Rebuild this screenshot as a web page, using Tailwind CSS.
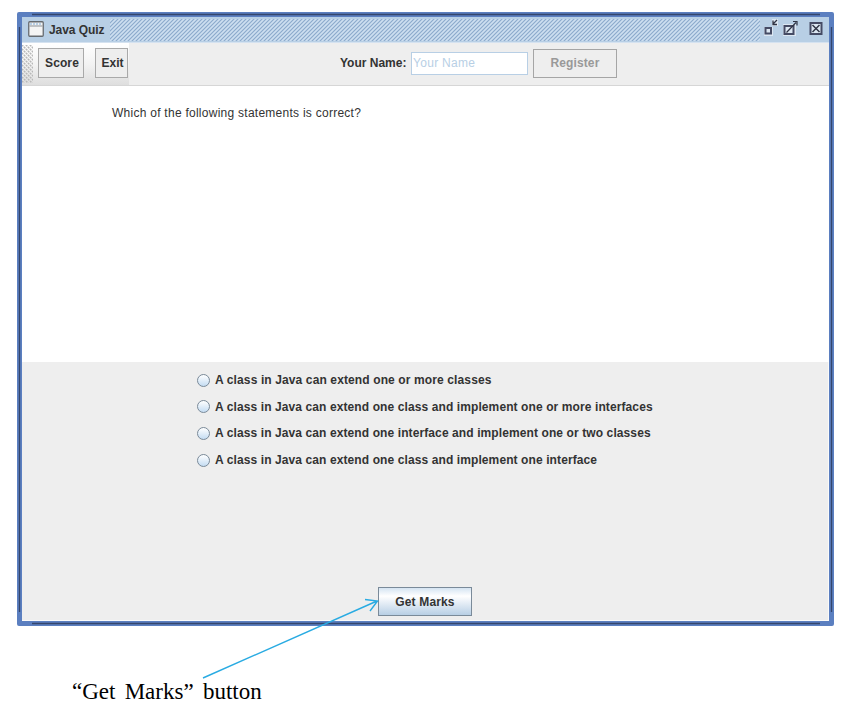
<!DOCTYPE html>
<html lang="en"><head><meta charset="utf-8"><title>Java Quiz</title>
<script src="https://cdn.jsdelivr.net/npm/@tailwindcss/browser@4"></script></head>
<body class="relative h-[722px] w-[852px] overflow-hidden bg-white font-['Liberation_Sans',Arial,sans-serif] text-[12px] leading-[16px] text-[#333]">
<div class="relative ml-[17px] mt-[12px] flex h-[614px] w-[817px] flex-col rounded-[2px] border-[5px] border-[#5b7fc0] bg-[#eeeeee]">
  <header class="flex h-[26px] shrink-0 items-center border-b border-[#d5e2f0] bg-[#b8cfe5] pl-[6px]">
    <svg class="mt-[-1px]" width="16" height="16" viewBox="0 0 16 16"><rect x=".75" y=".75" width="14.500" height="14.500" rx="1" fill="#f4f4f4" stroke="#666b70" stroke-width="1.3"/><path d="M1.500 5H14.500" stroke="#8a8f95"/><path d="M2 3H14" stroke="#b8cfe5" stroke-width="2" stroke-dasharray="2 1"/></svg>
    <h1 class="ml-[5px] w-[61px] whitespace-nowrap font-bold tracking-[-0.08px]">Java Quiz</h1>
    <svg class="h-[22px] w-[650px]" width="650" height="22"><defs><pattern id="hatch" width="4" height="4" patternUnits="userSpaceOnUse"><path d="M-1 5L5 -1" stroke="#8fabcd" stroke-width="1"/><path d="M-1 3L3 -1M1 5L5 1" stroke="#d3e2f2" stroke-width=".8"/></pattern></defs><rect width="650" height="22" fill="url(#hatch)"/></svg>
    <svg class="ml-[4px] mt-[-1px]" width="65" height="22" viewBox="0 0 65 22" fill="none">
      <path d="M0 9h9v9H0zM8 1h6v7H8z" fill="#dce7f2"/><rect x="1.500" y="10" width="5.500" height="5.500" stroke="#454b64" stroke-width="2"/><path d="M13 2L9.500 5.500M9 2.500v4h4" stroke="#303546" stroke-width="1.3"/>
      <path d="M19 6h13v12H19z" fill="#dce7f2"/><rect x="20.500" y="8" width="9" height="8" stroke="#454b64" stroke-width="2"/><path d="M22.500 14.500L32 4.500M29 3.500h4v4" stroke="#303546" stroke-width="1.2"/>
      <rect x="46.500" y="5" width="11" height="11" fill="#dce7f2" stroke="#454b64" stroke-width="2"/><path d="M48.500 7l7 7m0-7l-7 7" stroke="#303546" stroke-width="1.5"/>
    </svg>
  </header>
  <nav class="flex h-[43px] shrink-0 items-center border-b border-[#d6d6d6] bg-[#eeeeee] font-bold">
    <div class="flex h-full w-[107px] items-center bg-linear-to-b from-white via-[#f3f3f3] to-[#dedede]">
      <svg class="h-[38px] w-[11px] shrink-0" width="11" height="38"><defs><pattern id="grip" width="4" height="4" patternUnits="userSpaceOnUse"><path d="M0 0h1.500v1.500H0zM2 2h1.500v1.500H2z" fill="#b8b8b8"/><path d="M0 4L4 0" stroke="#d2d2d2" stroke-width=".7"/></pattern></defs><rect width="11" height="38" fill="url(#grip)"/></svg>
      <button class="ml-[5px] mt-[-2px] h-[30px] w-[46px] border border-[#a9a9a9] bg-[#eeeeee] pl-[2px] tracking-[0.1px]">Score</button>
      <button class="ml-[11px] mt-[-2px] h-[30px] w-[33px] border border-[#a9a9a9] bg-[#eeeeee] pl-[2px]">Exit</button>
    </div>
    <label class="ml-[211px] mt-[-2px] w-[71px] whitespace-nowrap" for="name">Your Name:</label>
    <input id="name" class="mt-[-2px] h-[23px] w-[117px] border border-[#b8cfe5] bg-white px-[1px] font-normal tracking-[0.3px] placeholder:text-[#b8cfe5] placeholder:opacity-100" placeholder="Your Name">
    <button class="ml-[5px] mt-[-2px] h-[29px] w-[84px] border border-[#a5a5a5] tracking-[0.1px] text-[#999]">Register</button>
  </nav>
  <main class="h-[276px] shrink-0 bg-white pl-[90px] pt-[19px]"><p class="whitespace-nowrap tracking-[0.26px]">Which of the following statements is correct?</p></main>
  <section class="flex grow flex-col border-b border-r border-[#fafafa] pl-[175px] pt-[10px] font-bold">
    <div class="flex h-[225px] flex-col gap-[10.700px]">
      <label class="flex h-[16px] items-center whitespace-nowrap"><span class="mr-[5px] h-[13px] w-[13px] rounded-full border border-[#7a8a99] bg-linear-to-b from-white to-[#c4dcf2]"></span><span class="tracking-[0.12px]">A class in Java can extend one or more classes</span></label>
      <label class="flex h-[16px] items-center whitespace-nowrap"><span class="mr-[5px] h-[13px] w-[13px] rounded-full border border-[#7a8a99] bg-linear-to-b from-white to-[#c4dcf2]"></span><span class="tracking-[0.1px]">A class in Java can extend one class and implement one or more interfaces</span></label>
      <label class="flex h-[16px] items-center whitespace-nowrap"><span class="mr-[5px] h-[13px] w-[13px] rounded-full border border-[#7a8a99] bg-linear-to-b from-white to-[#c4dcf2]"></span><span class="tracking-[0.1px]">A class in Java can extend one interface and implement one or two classes</span></label>
      <label class="flex h-[16px] items-center whitespace-nowrap"><span class="mr-[5px] h-[13px] w-[13px] rounded-full border border-[#7a8a99] bg-linear-to-b from-white to-[#c4dcf2]"></span><span class="tracking-[0.1px]">A class in Java can extend one class and implement one interface</span></label>
    </div>
    <button class="ml-[181px] mt-[-10px] h-[29px] w-[94px] shrink-0 border border-[#7a8a99] bg-linear-to-b from-[#d5e4f2] via-white via-30% to-[#b8cfe5] tracking-[0.15px]">Get Marks</button>
  </section>
  <svg class="pointer-events-none absolute left-[-5px] top-[-5px]" width="817" height="614" fill="none" stroke="#34466c" stroke-width="1.3"><path d="M15 2.500H803M15 611.500H803M2.500 15V600M814.500 15V600"/></svg>
</div>
<p class="ml-[72px] mt-[52px] whitespace-nowrap font-['Liberation_Serif','Times_New_Roman',serif] text-[23px] leading-[28px] text-black [word-spacing:3.5px]">“Get Marks” button</p>
<svg class="pointer-events-none absolute left-0 top-0" width="852" height="722" fill="none" stroke="#29abe2" stroke-width="1.4"><path d="M203 678L377 601M365 599.500L377.500 601L370 611"/></svg>
</body></html>
